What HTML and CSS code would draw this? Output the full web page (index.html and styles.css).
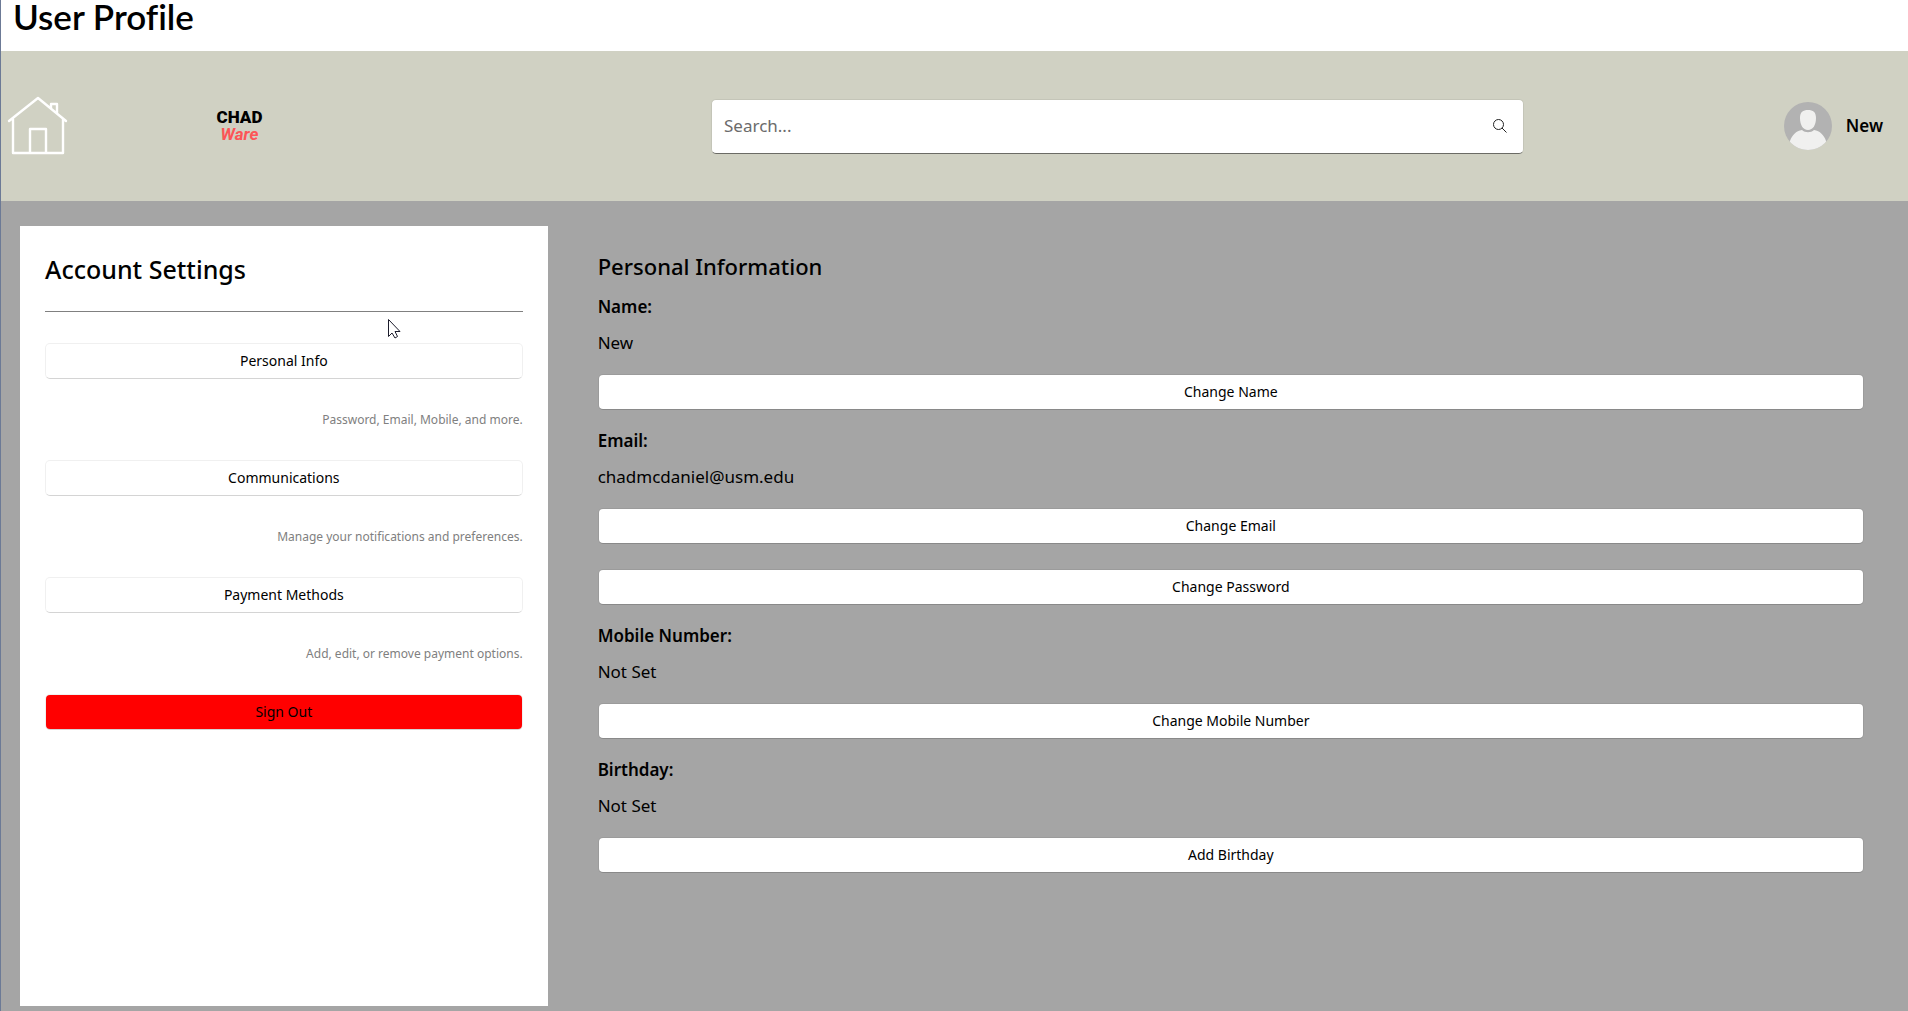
FILE: index.html
```html
<!DOCTYPE html>
<html lang="en">
<head>
  <meta charset="utf-8">
  <meta name="viewport" content="width=device-width, initial-scale=1">
  <title>User Profile</title>
  <link rel="stylesheet" href="styles.css">
</head>
<body>
  <h1 class="page-title">User Profile</h1>

  <header class="topbar">
    <a class="home" href="#" aria-label="Home">
      <svg width="62" height="60" viewBox="0 0 62 60" fill="none" stroke="#fff" stroke-width="2.400" stroke-linecap="round" stroke-linejoin="round">
        <path d="M2 25 31 2l28 23M6 23v34h50V23M23 57V33h16v24M44 12V8h6v9"/>
      </svg>
    </a>
    <a class="logo" href="#">
      <span class="logo-top">CHAD</span>
      <span class="logo-bottom">Ware</span>
    </a>
    <form class="search" role="search">
      <input class="search-input" type="text" placeholder="Search..." aria-label="Search">
      <button class="search-button" type="button" aria-label="Submit search">
        <svg width="14" height="14" viewBox="0 0 14 14" fill="none" stroke="#222" stroke-width="1">
          <circle cx="5.5" cy="5.5" r="5"/>
          <path d="M9 9l4.500 4.500"/>
        </svg>
      </button>
    </form>
    <a class="user" href="#">
      <svg width="48" height="48" viewBox="0 0 48 48">
        <clipPath id="disc"><circle cx="24" cy="24" r="24"/></clipPath>
        <g clip-path="url(#disc)">
          <path fill="#b2b2b2" d="M0 0h48v48H0z"/>
          <path fill="#f0f0ef" d="M24 8c5 0 8 2 8 8 0 7-3 12-8 12s-8-5-8-12c0-6 3-8 8-8zM18 28c3 3 9 3 12 0 6 1 10 5 12 11v9H6v-9c2-6 6-10 12-11z"/>
        </g>
      </svg>
      <span>New</span>
    </a>
  </header>

  <main class="content">
    <nav class="sidebar" aria-label="Account settings">
      <h2 class="sidebar-title">Account Settings</h2>
      <button class="button" type="button">Personal Info</button>
      <p class="note">Password, Email, Mobile, and more.</p>
      <button class="button" type="button">Communications</button>
      <p class="note">Manage your notifications and preferences.</p>
      <button class="button" type="button">Payment Methods</button>
      <p class="note">Add, edit, or remove payment options.</p>
      <button class="button button-danger" type="button">Sign Out</button>
      <svg class="pointer" width="13" height="20" viewBox="0 0 13 20" fill="#fff" stroke="#1c1c2c" stroke-width="1" aria-hidden="true">
        <path d="M.5.5v17l3.500-3.500 3 5 2.500-1.500-2.500-5h5z"/>
      </svg>
    </nav>

    <section class="details">
      <h2 class="details-title">Personal Information</h2>
      <div class="field">
        <h3 class="label">Name:</h3>
        <p class="value">New</p>
        <button class="button" type="button">Change Name</button>
      </div>
      <div class="field">
        <h3 class="label">Email:</h3>
        <p class="value">chadmcdaniel@usm.edu</p>
        <button class="button" type="button">Change Email</button>
        <button class="button button-extra" type="button">Change Password</button>
      </div>
      <div class="field">
        <h3 class="label">Mobile Number:</h3>
        <p class="value">Not Set</p>
        <button class="button" type="button">Change Mobile Number</button>
      </div>
      <div class="field">
        <h3 class="label">Birthday:</h3>
        <p class="value">Not Set</p>
        <button class="button" type="button">Add Birthday</button>
      </div>
    </section>
  </main>
</body>
</html>
```
FILE: styles.css
```css
* {
  box-sizing: border-box;
}

body {
  display: flex;
  flex-direction: column;
  min-height: 100vh;
  margin: 0;
  border-left: 1px solid #6c7a96;
  background: #a5a5a5;
  color: #000;
  font: 400 17px/24px "Noto Sans", "Open Sans", sans-serif;
}

h1,
h2,
h3,
p {
  margin: 0;
}

a {
  color: inherit;
  text-decoration: none;
}

svg {
  display: block;
}

.page-title {
  padding: 0 12px 19px;
  background: #fff;
  font: 600 35px/32px Lato, sans-serif;
  font-variant-ligatures: none;
}

/* Top bar */

.topbar {
  display: grid;
  grid-template-columns: 76px 325fr 309fr 813fr 384fr;
  align-items: center;
  min-height: 150px;
  background: #d0d1c3;
}

.home {
  padding-left: 6px;
}

.logo {
  display: flex;
  flex-direction: column;
  align-items: center;
  font-family: Roboto, sans-serif;
  font-size: 17px;
  font-weight: 900;
  line-height: 17px;
}

.logo-bottom {
  color: #fc5557;
  font-style: italic;
  font-weight: 700;
}

.search {
  display: flex;
  grid-column: 4;
  align-items: center;
  height: 55px;
  padding: 0 16px 0 12px;
  border: 1px solid #c4c5b8;
  border-bottom-color: #6b6b65;
  border-radius: 5px;
  background: #fff;
}

.search-input {
  flex: 1;
  min-width: 0;
  padding: 0;
  border: 0;
  outline: 0;
  background: none;
  font: inherit;
}

.search-input::placeholder {
  color: #6b6b6b;
  opacity: 1;
}

.search-button {
  padding: 0;
  border: 0;
  background: none;
}

.user {
  display: flex;
  align-items: center;
  justify-self: end;
  gap: 14px;
  padding-right: 25px;
  font-weight: 600;
}

/* Page body */

.content {
  display: grid;
  flex: 1;
  grid-template-columns: 5fr 12fr;
  gap: 50px;
  padding: 25px 44px 5px 19px;
}

.sidebar {
  position: relative;
  display: flex;
  flex-direction: column;
  gap: 31px;
  padding: 25px;
  background: #fff;
}

.sidebar-title {
  padding-bottom: 24px;
  border-bottom: 1px solid #808080;
  font-size: 25px;
  font-weight: 500;
  line-height: 36px;
}

.note {
  color: #808080;
  font-size: 12px;
  line-height: 19px;
  text-align: right;
}

.button {
  height: 36px;
  padding: 0 12px;
  border: 1px solid rgba(0, 0, 0, 0.06);
  border-bottom-color: rgba(0, 0, 0, 0.17);
  border-radius: 5px;
  background: #fff;
  background-clip: padding-box;
  color: #000;
  font: inherit;
  font-size: 14px;
}

.button-danger {
  background-color: #f00;
}

.pointer {
  position: absolute;
  top: 93px;
  left: 368px;
}

.details {
  display: flex;
  flex-direction: column;
  gap: 19px;
  padding-top: 23px;
}

.details-title {
  margin-bottom: -7px;
  font-size: 22px;
  font-weight: 500;
  line-height: 34px;
}

.field {
  display: flex;
  flex-direction: column;
}

.label {
  font-size: 17px;
  font-weight: 600;
}

.value {
  padding: 12px 0 19px;
}

.button-extra {
  margin-top: 25px;
}
```
